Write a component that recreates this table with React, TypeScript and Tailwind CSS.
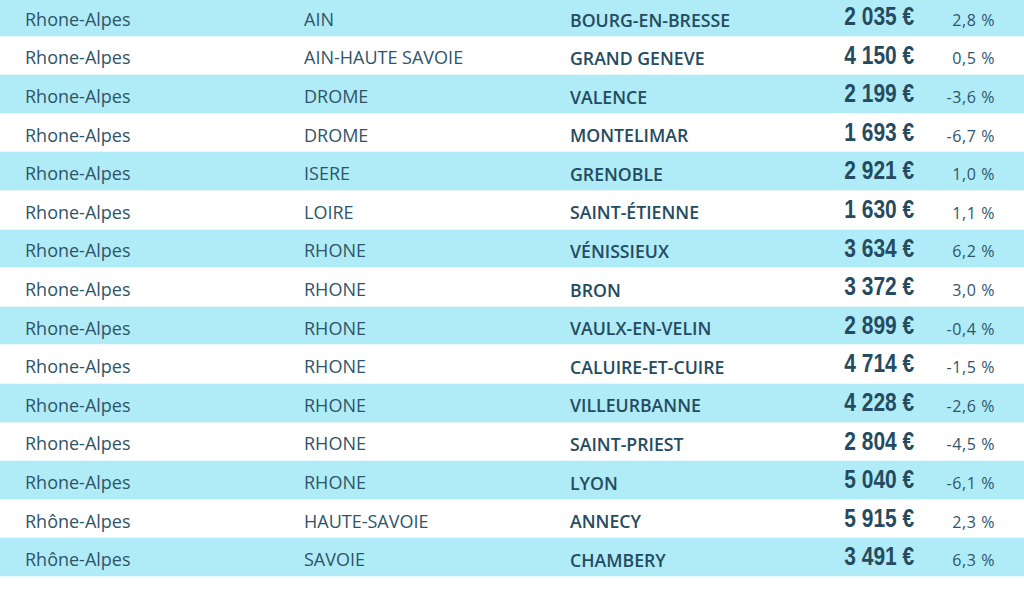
const rows = [
  ["Rhone-Alpes", "AIN", "BOURG-EN-BRESSE", "2 035 €", "2,8 %"],
  ["Rhone-Alpes", "AIN-HAUTE SAVOIE", "GRAND GENEVE", "4 150 €", "0,5 %"],
  ["Rhone-Alpes", "DROME", "VALENCE", "2 199 €", "-3,6 %"],
  ["Rhone-Alpes", "DROME", "MONTELIMAR", "1 693 €", "-6,7 %"],
  ["Rhone-Alpes", "ISERE", "GRENOBLE", "2 921 €", "1,0 %"],
  ["Rhone-Alpes", "LOIRE", "SAINT-ÉTIENNE", "1 630 €", "1,1 %"],
  ["Rhone-Alpes", "RHONE", "VÉNISSIEUX", "3 634 €", "6,2 %"],
  ["Rhone-Alpes", "RHONE", "BRON", "3 372 €", "3,0 %"],
  ["Rhone-Alpes", "RHONE", "VAULX-EN-VELIN", "2 899 €", "-0,4 %"],
  ["Rhone-Alpes", "RHONE", "CALUIRE-ET-CUIRE", "4 714 €", "-1,5 %"],
  ["Rhone-Alpes", "RHONE", "VILLEURBANNE", "4 228 €", "-2,6 %"],
  ["Rhone-Alpes", "RHONE", "SAINT-PRIEST", "2 804 €", "-4,5 %"],
  ["Rhone-Alpes", "RHONE", "LYON", "5 040 €", "-6,1 %"],
  ["Rhône-Alpes", "HAUTE-SAVOIE", "ANNECY", "5 915 €", "2,3 %"],
  ["Rhône-Alpes", "SAVOIE", "CHAMBERY", "3 491 €", "6,3 %"],
];

export default function App() {
  return (
    <div className="w-[1024px] h-[600px] overflow-hidden bg-white font-['Open_Sans',sans-serif]">
      <div className="-mt-[2px]">
        {rows.map(([region, dept, city, price, pct], i) => (
          <div
            key={city}
            className={`flex items-center h-[38.6px] border-b border-[#e9f8fc] ${
              i % 2 === 0 ? "bg-[#b0ecf7]" : "bg-white"
            }`}
          >
            <div className="w-[279px] ml-[25px] pt-[5px] text-[18px] text-[#2f5468]">
              {region}
            </div>
            <div className="w-[266px] pt-[5px] text-[18px] text-[#2f5468]">{dept}</div>
            <div className="w-[240px] pt-[6px] text-[17.7px] font-semibold text-[#244b60]">
              {city}
            </div>
            <div className="w-[104px] flex justify-end">
              <span className="inline-block origin-right scale-x-[0.82] text-[25.5px] leading-none font-bold text-[#244b60] font-['Liberation_Sans',sans-serif]">
                {price}
              </span>
            </div>
            <div className="w-[81px] pt-[6px] text-right text-[16px] tracking-[0.6px] text-[#2f5468]">
              {pct}
            </div>
          </div>
        ))}
      </div>
    </div>
  );
}
